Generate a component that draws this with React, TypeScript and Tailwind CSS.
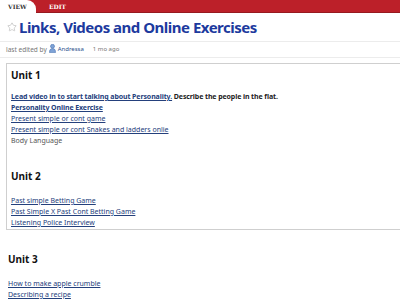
import { Star } from 'lucide-react';

interface PageLink {
  label: string;
  bold?: boolean;
  after?: string;
}

const unit1: PageLink[] = [
  { label: 'Lead video in to start talking about Personality.', bold: true, after: ' Describe the people in the flat.' },
  { label: 'Personality Online Exercise', bold: true },
  { label: 'Present simple or cont game' },
  { label: 'Present simple or cont Snakes and ladders onlie' },
];

const unit2: PageLink[] = [
  { label: 'Past simple Betting Game' },
  { label: 'Past Simple X Past Cont Betting Game' },
  { label: 'Listening Police Interview' },
];

const unit3: PageLink[] = [
  { label: 'How to make apple crumble' },
  { label: 'Describing a recipe' },
];

const LinkRow = ({ link }: { link: PageLink }) => (
  <div className="h-[11px] leading-[11px] whitespace-nowrap">
    <a href="#" className={`text-[#24407c] underline ${link.bold ? 'font-bold tracking-[-0.1px]' : ''}`}>
      {link.label}
    </a>
    {link.after && <span className="font-bold text-[#222] tracking-[-0.1px]">{link.after}</span>}
  </div>
);

const UserIcon = () => (
  <svg width="7" height="9" viewBox="0 0 7 9" className="inline-block mx-[2px] -mt-[2px]">
    <circle cx="3.5" cy="2.3" r="2" fill="#7fa3d6" stroke="#4a73b3" strokeWidth="0.6" />
    <path d="M0.5 8.6 C0.5 5.5 1.5 4.6 3.5 4.6 C5.5 4.6 6.5 5.5 6.5 8.6 Z" fill="#7fa3d6" stroke="#4a73b3" strokeWidth="0.6" />
  </svg>
);

const App = () => {
  return (
    <div className="w-[400px] h-[300px] bg-white overflow-hidden font-['Noto_Sans',sans-serif] text-[7px]">
      {/* tabs */}
      <div className="flex h-[13px] bg-[#bc2029] border-b border-[#961a20]">
        <div className="bg-white h-[13px] w-[36px] rounded-tr-[9px] pl-[8px] flex items-center text-[6px] font-bold text-[#333] font-['DejaVu_Serif',serif]">
          VIEW
        </div>
        <div className="pl-[13px] flex items-center text-[6px] font-bold text-white font-['DejaVu_Serif',serif]">
          EDIT
        </div>
      </div>

      {/* title */}
      <div className="flex items-center h-[29px] pl-[7px] border-b border-[#ececec]">
        <Star size={10} strokeWidth={1.5} className="text-[#b5b5b5] mr-[2px]" />
        <h1 className="text-[15px] font-bold text-[#1d3a9e] tracking-[-0.5px] leading-none">
          Links, Videos and Online Exercises
        </h1>
      </div>

      {/* meta */}
      <div className="flex items-center h-[16px] pl-[6px] text-[6.5px] text-[#777] border-b border-[#ececec]">
        <span>last edited by</span>
        <UserIcon />
        <span className="text-[#2b4d8c] text-[6px]">Andressa</span>
        <span className="ml-[9px] text-[6px]">1 mo ago</span>
      </div>

      {/* unit 1 & 2 box */}
      <div className="ml-[6px] mt-[5px] border border-[#cfcfcf] border-r-0 pl-[4px] pt-[4px]">
        <h2 className="text-[10px] font-bold text-[#111] leading-[14px]">Unit 1</h2>
        <div className="mt-[9px]">
          {unit1.map((l, i) => (
            <LinkRow key={i} link={l} />
          ))}
          <div className="h-[11px] leading-[11px] text-[#555]">Body Language</div>
        </div>
        <h2 className="mt-[23px] text-[10px] font-bold text-[#111] leading-[14px]">Unit 2</h2>
        <div className="mt-[12px] pb-[1px]">
          {unit2.map((l, i) => (
            <LinkRow key={i} link={l} />
          ))}
        </div>
      </div>

      {/* unit 3 */}
      <div className="pl-[8px] mt-[22px]">
        <h2 className="text-[10px] font-bold text-[#111] leading-[14px]">Unit 3</h2>
        <div className="mt-[12px]">
          {unit3.map((l, i) => (
            <LinkRow key={i} link={l} />
          ))}
        </div>
      </div>
    </div>
  );
};

export default App;
